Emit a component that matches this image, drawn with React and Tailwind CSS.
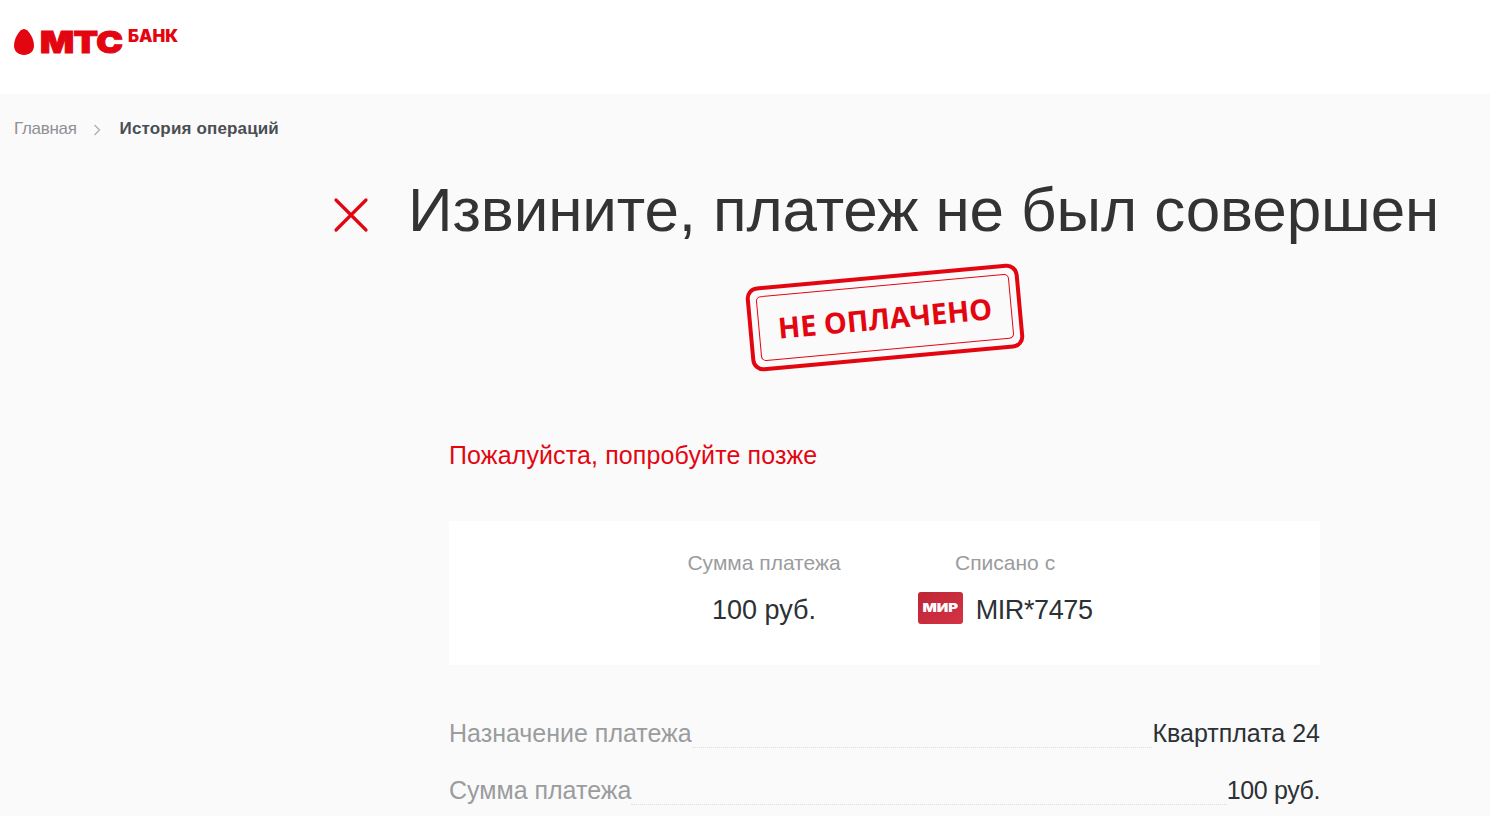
const sans = "font-['Liberation_Sans',Arial,sans-serif]";
const red = "#e30611";

function Logo() {
  return (
    <div className="flex items-start">
      <svg width="20" height="30" viewBox="0 0 20 30" className="mt-[1px] block">
        <path d="M10 2C14.500 2 20 11.500 20 18.500C20 24.500 15.500 28 10 28C4.500 28 0 24.500 0 18.500C0 11.500 5.500 2 10 2Z" fill={red} />
      </svg>
      <span className="mt-[1px] ml-[6px] block h-[30px] w-[88px] origin-left scale-x-[1.19] font-['Inter',sans-serif] text-[30px] leading-[30px] font-black tracking-[-0.5px] whitespace-nowrap text-[#e30611] [-webkit-text-stroke:1px_#e30611]">МТС</span>
      <span className="mt-[1px] block font-['Inter',sans-serif] text-[17px] leading-[18px] font-black whitespace-nowrap text-[#e30611]">БАНК</span>
    </div>
  );
}

function Stamp() {
  return (
    <div className="mt-[27px] ml-[745px] flex w-[279px] justify-center">
      <div className="h-[85px] w-[274px] -rotate-[5.2deg] rounded-[12px] border-[4px] border-[#e30611] p-[6px]">
        <div className="flex h-full items-center justify-center rounded-[5px] border-[1.5px] border-[#e30611]">
          <span className="font-['Open_Sans',sans-serif] text-[29px] leading-none font-bold text-[#e30611]">НЕ ОПЛАЧЕНО</span>
        </div>
      </div>
    </div>
  );
}

function MirCard() {
  return (
    <div className="flex h-[32px] w-[45px] items-center justify-center overflow-hidden rounded-[3px] bg-gradient-to-br from-[#bf2535] to-[#d43345]">
      <span className="scale-x-[1.25] font-['Inter',sans-serif] text-[12px] leading-none font-black text-white">МИР</span>
    </div>
  );
}

function Row({ label, value, valueClass }) {
  return (
    <div className="flex h-[57px] items-start">
      <span className="text-[25px] leading-[32px] text-[#9a9c9e]">{label}</span>
      <span className="mt-[30px] h-0 flex-1 border-b border-dotted border-[#dcdee0]" />
      <span className={`text-[25px] leading-[32px] text-[#2c3135] ${valueClass}`}>{value}</span>
    </div>
  );
}

export default function App() {
  return (
    <div className={`${sans} h-[816px] overflow-hidden bg-[#fafafa]`}>
      <header className="flex h-[94px] items-start bg-white pt-[26px] pl-[14px]">
        <Logo />
      </header>
      <nav className="mt-[25px] flex h-[20px] items-center pl-[14px] leading-[20px]">
        <span className="text-[17px] tracking-[-0.3px] text-[#8f9194]">Главная</span>
        <svg width="8" height="12" viewBox="0 0 8 12" className="mt-[1px] mr-[19px] ml-[16px]" fill="none" stroke="#a5acb3" strokeWidth="1.200">
          <path d="M1.500 1L6.500 6L1.500 11" />
        </svg>
        <span className="text-[17px] font-bold tracking-[0.15px] text-[#4a4f54]">История операций</span>
      </nav>
      <div className="mt-[33px] flex items-center pl-[333px]">
        <svg width="36" height="36" viewBox="0 0 36 36" className="mt-[10px] mr-[39px]" fill="none" stroke="#e30611" strokeWidth="3.200" strokeLinecap="round">
          <path d="M3 3L33 33M33 3L3 33" />
        </svg>
        <h1 className="text-[62px] leading-[76px] font-normal tracking-[-0.1px] whitespace-nowrap text-[#333333]">Извините, платеж не был совершен</h1>
      </div>
      <Stamp />
      <main className="ml-[449px] w-[871px] pt-[80px]">
        <p className="text-[25px] leading-[31px] tracking-[0.12px] text-[#e30611]">Пожалуйста, попробуйте позже</p>
        <section className="mt-[50px] flex h-[144px] items-start justify-center gap-[77px] bg-white pt-[27px] pl-[11px]">
          <div className="flex flex-col items-center">
            <span className="text-[21px] leading-[30px] text-[#9a9c9e]">Сумма платежа</span>
            <span className="mt-[16px] text-[27px] leading-[32px] text-[#2c3135]">100 руб.</span>
          </div>
          <div className="flex flex-col items-center">
            <span className="text-[21px] leading-[30px] text-[#9a9c9e]">Списано с</span>
            <div className="mt-[12px] flex items-center gap-[13px]">
              <MirCard />
              <span className="mt-[4px] text-[27px] leading-[32px] tracking-[-0.4px] text-[#2c3135]">MIR*7475</span>
            </div>
          </div>
        </section>
        <div className="mt-[52px]">
          <Row label="Назначение платежа" value="Квартплата 24" valueClass="" />
          <Row label="Сумма платежа" value="100 руб." valueClass="tracking-[-0.4px]" />
        </div>
      </main>
    </div>
  );
}
